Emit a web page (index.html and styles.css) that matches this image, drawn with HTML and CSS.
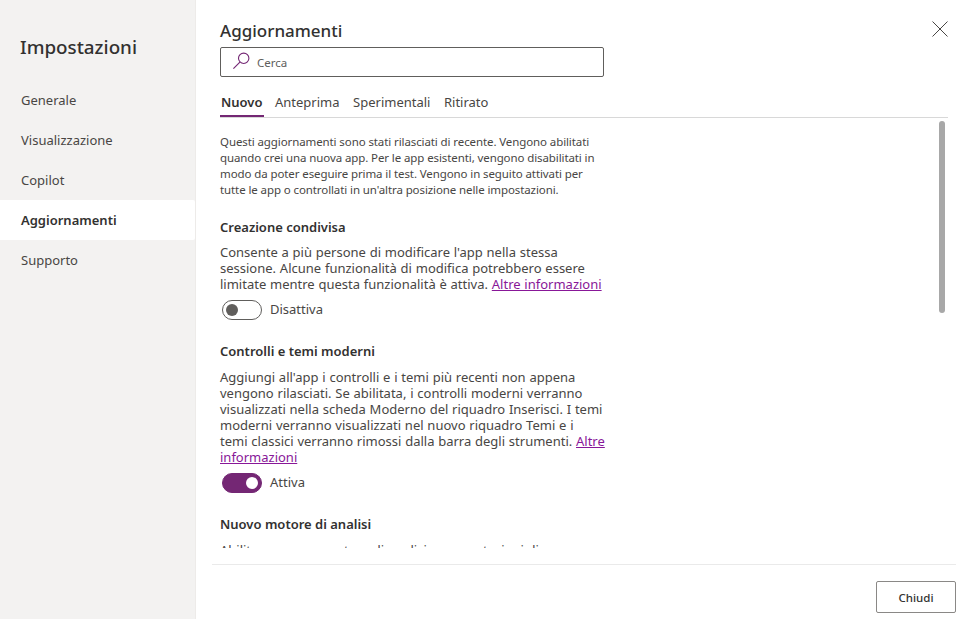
FILE: index.html
```html
<!DOCTYPE html>
<html lang="it">
<head>
  <meta charset="UTF-8" />
  <meta name="viewport" content="width=device-width, initial-scale=1" />
  <title>Impostazioni</title>
  <link rel="stylesheet" href="styles.css">
</head>
<body>

  <nav class="sidebar">
    <h1 class="sidebar-title">Impostazioni</h1>
    <a class="nav-item">Generale</a>
    <a class="nav-item">Visualizzazione</a>
    <a class="nav-item">Copilot</a>
    <a class="nav-item active">Aggiornamenti</a>
    <a class="nav-item">Supporto</a>
  </nav>

  <main class="main">
    <header class="header">
      <h2 class="title">Aggiornamenti</h2>
      <button class="close" aria-label="Chiudi">
        <svg width="16" height="16" viewBox="0 0 16 16"><path d="M.5.5l15 15M15.5.5l-15 15" fill="none" stroke="#484644" stroke-width="1"/></svg>
      </button>
    </header>

    <div class="search">
      <svg width="18" height="18" viewBox="0 0 18 18"><g fill="none" stroke="#742774" stroke-width="1.1"><circle cx="10.7" cy="6.3" r="5.2"/><path d="M6.9 10.1L.4 16.6"/></g></svg>
      <span>Cerca</span>
    </div>

    <div class="tabs">
      <span class="tab active">Nuovo</span>
      <span class="tab">Anteprima</span>
      <span class="tab">Sperimentali</span>
      <span class="tab">Ritirato</span>
    </div>

    <div class="panel">
      <div class="content">
        <p class="intro">
          Questi aggiornamenti sono stati rilasciati di recente. Vengono abilitati<br>
          quando crei una nuova app. Per le app esistenti, vengono disabilitati in<br>
          modo da poter eseguire prima il test. Vengono in seguito attivati per<br>
          tutte le app o controllati in un'altra posizione nelle impostazioni.
        </p>

        <section class="setting">
          <h3>Creazione condivisa</h3>
          <p>
            Consente a più persone di modificare l'app nella stessa<br>
            sessione. Alcune funzionalità di modifica potrebbero essere<br>
            limitate mentre questa funzionalità è attiva. <a class="link">Altre informazioni</a>
          </p>
          <div class="toggle-row"><span class="toggle"></span><span class="toggle-label">Disattiva</span></div>
        </section>

        <section class="setting setting-modern">
          <h3>Controlli e temi moderni</h3>
          <p>
            Aggiungi all'app i controlli e i temi più recenti non appena<br>
            vengono rilasciati. Se abilitata, i controlli moderni verranno<br>
            visualizzati nella scheda Moderno del riquadro Inserisci. I temi<br>
            moderni verranno visualizzati nel nuovo riquadro Temi e i<br>
            temi classici verranno rimossi dalla barra degli strumenti. <a class="link">Altre<br>
            informazioni</a>
          </p>
          <div class="toggle-row"><span class="toggle on"></span><span class="toggle-label">Attiva</span></div>
        </section>

        <section class="setting setting-engine">
          <h3>Nuovo motore di analisi</h3>
          <p>Abilita un nuovo motore di analisi con prestazioni di</p>
        </section>
      </div>
      <div class="scrollbar"></div>
    </div>

    <footer class="footer">
      <button class="btn">Chiudi</button>
    </footer>
  </main>

</body>
</html>
```

FILE: styles.css
```css
* {
  box-sizing: border-box;
}
body {
  margin: 0;
  display: flex;
  height: 619px;
  overflow: hidden;
  font-family: "Noto Sans", "Open Sans", sans-serif;
  font-size: 13px;
  color: #484644;
  background: #fff;
  white-space: nowrap;
}
h1, h2, h3, p {
  margin: 0;
}
h1, h2, h3 {
  color: #323130;
}
.sidebar {
  width: 196px;
  flex: none;
  background: #f3f2f1;
  border-right: 1px solid #edebe9;
}
.sidebar-title {
  height: 80px;
  padding: 34px 0 0 20px;
  font-size: 18.8px;
  line-height: 26px;
  font-weight: 500;
}
.nav-item {
  display: block;
  height: 40px;
  padding-left: 21px;
  line-height: 40px;
}
.nav-item.active {
  background: #fff;
  border-radius: 0 2px 2px 0;
  color: #323130;
  font-weight: 600;
}
.main {
  flex: 1;
  display: flex;
  flex-direction: column;
  padding: 0 8px 0 16px;
}
.header {
  display: flex;
  justify-content: space-between;
  height: 47px;
  padding: 19px 8px 0 8px;
}
.title {
  font-size: 17px;
  line-height: 24px;
  font-weight: 550;
}
.close {
  width: 16px;
  height: 16px;
  margin-top: 2px;
  padding: 0;
  border: none;
  background: none;
}
.close svg {
  display: block;
}
.search {
  display: flex;
  align-items: center;
  gap: 6px;
  width: 384px;
  height: 30px;
  margin-left: 8px;
  padding-left: 12px;
  border: 1px solid #605e5c;
  border-radius: 2px;
  font-size: 11.5px;
  color: #605e5c;
}
.search svg {
  margin-top: -2px;
}
.tabs {
  display: flex;
  height: 41px;
  margin: 0 8px;
  padding-top: 10px;
  border-bottom: 1px solid #d8d8d8;
  line-height: 30px;
}
.tab {
  height: 30px;
  margin-right: 13.5px;
}
.tab.active {
  width: 44px;
  margin-right: 11px;
  padding-left: 1px;
  border-bottom: 2px solid #742774;
  color: #323130;
  font-weight: 600;
}
.panel {
  display: flex;
  justify-content: space-between;
  height: 430px;
  padding: 3px 11px 0 8px;
  overflow: hidden;
}
.content {
  padding-top: 13px;
}
.scrollbar {
  width: 6px;
  height: 192px;
  border-radius: 3px;
  background: #a8a8a8;
}
.intro {
  height: 84px;
  font-size: 11.5px;
  line-height: 16px;
  letter-spacing: -0.1px;
}
.setting h3 {
  height: 26px;
  font-size: 13px;
  line-height: 18px;
  font-weight: 600;
}
.setting p {
  line-height: 16px;
  word-spacing: 0.4px;
}
.setting-modern p,
.setting-engine p {
  padding-top: 1px;
}
.link {
  color: #881798;
  text-decoration: underline;
}
.toggle-row {
  display: flex;
  align-items: center;
  gap: 8px;
  height: 20px;
  margin: 8px 0 22px 2px;
}
.toggle {
  display: flex;
  align-items: center;
  width: 40px;
  height: 20px;
  padding: 0 3px;
  border: 1px solid #605e5c;
  border-radius: 10px;
}
.toggle::after {
  content: "";
  width: 12px;
  height: 12px;
  border-radius: 50%;
  background: #605e5c;
}
.toggle.on {
  justify-content: flex-end;
  border-color: #742774;
  background: #742774;
}
.toggle.on::after {
  background: #fff;
}
.toggle-label {
  padding-bottom: 2px;
}
.footer {
  display: flex;
  justify-content: flex-end;
  margin-top: 16px;
  padding-top: 16px;
  border-top: 1px solid #eaeaea;
}
.btn {
  width: 80px;
  height: 32px;
  border: 1px solid #8a8886;
  border-radius: 2px;
  background: #fff;
  color: #323130;
  font: 550 11.5px "Noto Sans", sans-serif;
}
```
